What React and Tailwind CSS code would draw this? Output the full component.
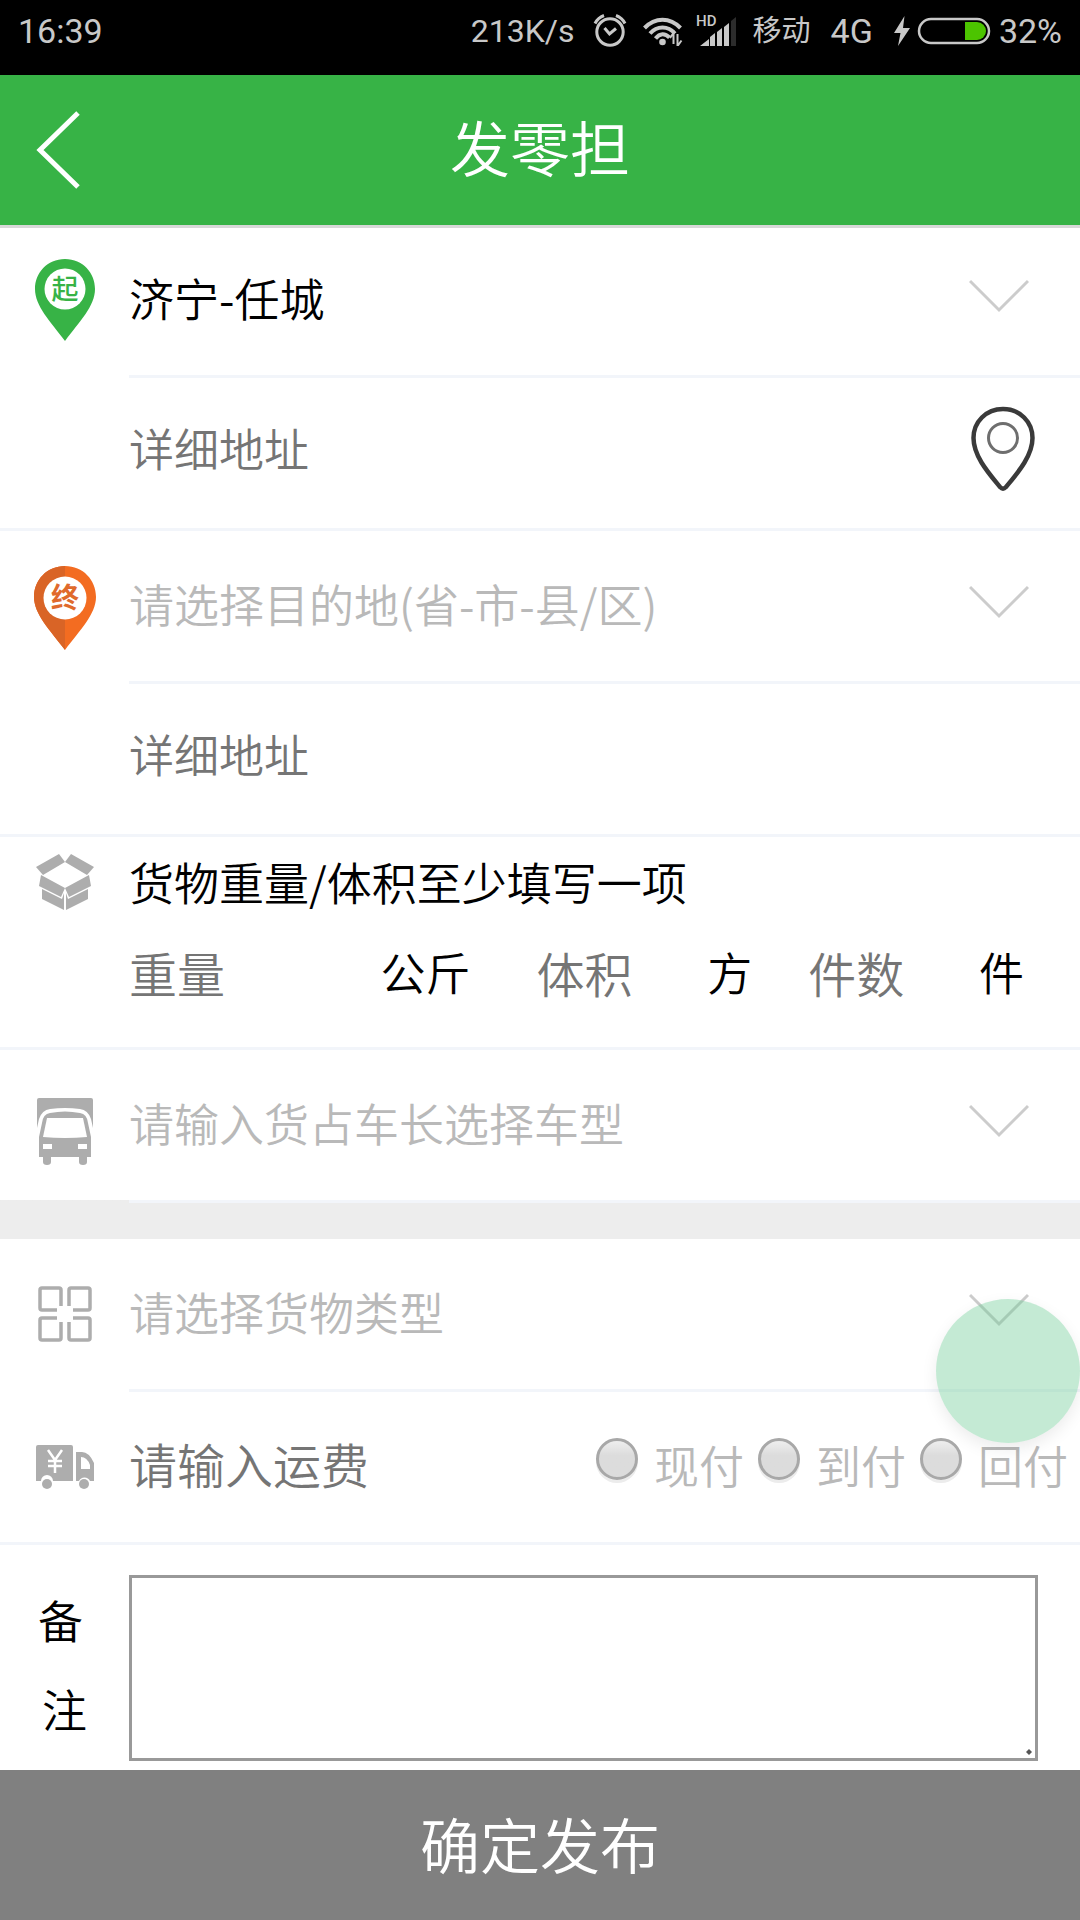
import React, { useState } from 'react';

const payments = [
  { id: 'now', label: '现付' },
  { id: 'arrival', label: '到付' },
  { id: 'receipt', label: '回付' }
];

const StatusBar = () => (
  <div className="flex h-[75px] items-start justify-between bg-black px-[18px] pt-[11px] font-['Roboto','Noto_Sans_CJK_SC',sans-serif] text-[34px] font-normal leading-10 text-[#c8c8c8]">
    <span>16:39</span>
    <div className="flex h-10 items-center">
      <span className="text-[32px]">213K/s</span>
      <svg className="ml-[18px] h-[36px] w-[34px]" viewBox="0 0 34 36" fill="none" stroke="currentColor" strokeWidth="3">
        <circle cx="17" cy="19" r="13.2" />
        <path d="M11.5 15l5 6 6.5-5.5" />
        <path d="M2 10.500C4 6.500 7 4 11 2.500M32 10.500C30 6.500 27 4 23 2.500" />
      </svg>
      <svg className="ml-4 h-[30px] w-10" viewBox="0 0 40 30" fill="none" stroke="currentColor" strokeWidth="4">
        <path d="M1.500 12C12 1 27 1 37.500 12" />
        <path d="M7 17.500C14 9.500 25 9.500 32 17.500" />
        <path d="M12.500 22.500C17 17 22 17 26.500 21.500" />
        <circle cx="19.500" cy="26" r="3.300" fill="currentColor" stroke="none" />
        <path d="M30.500 28V17l-3.500 5M34.500 18v12l4-5.500" strokeWidth="2" />
      </svg>
      <svg className="ml-3 h-[48px] w-[42px]" viewBox="0 -8 42 48" fill="currentColor">
        <path d="M5 31l9-7v7zM15 22l5-4v13h-5zM22 17l5-4v18h-5zM29 12l5-4v23h-5z" />
        <path d="M36 6l5-4v29h-5z" fill="#2c2c2c" />
        <text x="1" y="11" fontSize="15" fontWeight="500">HD</text>
      </svg>
      <span className="ml-4 text-[29px]">移动</span>
      <span className="ml-5">4G</span>
      <svg className="ml-5 h-[30px] w-[18px]" viewBox="0 0 18 30" fill="currentColor">
        <path d="M11.500 0L1 17h6.500L5 30l12-18h-7z" />
      </svg>
      <svg className="ml-[6px] h-[28px] w-[74px]" viewBox="0 0 74 28">
        <rect x="2" y="2" width="70" height="24" rx="12" fill="none" stroke="currentColor" strokeWidth="2.500" />
        <path d="M48 5h12a9 9 0 0 1 0 18H48z" fill="#4cc400" />
      </svg>
      <span className="ml-2">32%</span>
    </div>
  </div>
);

const StartPin = () => (
  <svg className="mb-1 h-[84px] w-[64px]" viewBox="0 0 64 84">
    <path d="M32 1C14 1 2 15 2 31c0 17 15 32 30 52 15-20 30-35 30-52C62 15 50 1 32 1z" fill="#37b346" />
    <circle cx="32" cy="31" r="20.500" fill="#fff" />
    <text x="32" y="41" fontSize="27" fontWeight="500" textAnchor="middle" fill="#37b346">起</text>
  </svg>
);

const EndPin = () => (
  <svg className="h-[86px] w-[64px]" viewBox="0 0 64 86">
    <path d="M32 1C14 1 1 15 1 32c0 17 16 33 31 53 15-20 31-36 31-53C63 15 50 1 32 1z" fill="#f36c21" />
    <path d="M32 1C14 1 1 15 1 32c0 17 16 33 31 53z" fill="#d96426" />
    <circle cx="32" cy="33" r="21.500" fill="#fff" />
    <text x="32" y="43" fontSize="28" fontWeight="700" textAnchor="middle" fill="#e06a2c">终</text>
  </svg>
);

const BoxIcon = () => (
  <svg className="h-[58px] w-[60px]" viewBox="0 0 60 58" fill="#adadad">
    <path d="M24 1L1 14l7 8 22-13zM36 1l23 13-7 8L30 9z" />
    <path d="M6 22l24 13-4 9L4 33zM54 22L30 35l4 9 22-11z" />
    <path d="M7 36l20 10 2-6v17L7 46zM53 36L33 46l-2-6v17l22-11z" />
  </svg>
);

const TruckIcon = () => (
  <svg className="mt-2 h-[68px] w-[58px]" viewBox="0 0 58 68">
    <path d="M1 3q0-2 2-2h52q2 0 2 2v28l-2-9q-3-9-11-10-15-2-30 0-8 1-11 10l-2 9z" fill="#adadad" />
    <path d="M6 26q1-9 8-10 15-3 30 0 7 1 8 10l3 14v20h-4v5q0 3-4 3t-4-3v-5H15v5q0 3-4 3t-4-3v-5H3V40z" fill="#adadad" />
    <path d="M11 21h36l4 19q-22 2-44 0z" fill="#fff" />
    <path d="M7 47h9v5H7zM42 47h9v5h-9z" fill="#fff" />
  </svg>
);

const GridIcon = () => (
  <svg className="mb-1 h-[58px] w-[56px]" viewBox="0 0 56 58" fill="none" stroke="#adadad" strokeWidth="3.500">
    <path d="M20 25H5q-2 0-2-2V5q0-2 2-2h17q2 0 2 2v16M36 25h15q2 0 2-2V5q0-2-2-2H34q-2 0-2 2v16" />
    <path d="M20 33H5q-2 0-2 2v18q0 2 2 2h17q2 0 2-2V37M36 33h15q2 0 2 2v18q0 2-2 2H34q-2 0-2-2V37" />
    <path d="M20 21l4 4M36 21l-4 4M20 37l4-4M36 37l-4-4" stroke="#fff" strokeWidth="3" />
  </svg>
);

const VanIcon = () => (
  <svg className="h-[46px] w-[60px]" viewBox="0 0 60 46">
    <path d="M3 1h33q2 0 2 2v34H18a6 6 0 0 0-12 0H1V3q0-2 2-2z" fill="#adadad" />
    <path d="M41 8h6q7 0 12 11v18h-4a6 6 0 0 0-11 0h-3z" fill="#adadad" />
    <path d="M46 13q6 0 9 8v4h-9z" fill="#fff" />
    <circle cx="12" cy="40" r="5" fill="#adadad" />
    <circle cx="49" cy="40" r="5" fill="#adadad" />
    <path d="M13 6l7 10 7-10M20 16v13M13 17h14M13 22h14" fill="none" stroke="#fff" strokeWidth="2.500" />
  </svg>
);

const AddressPin = () => (
  <svg className="h-[86px] w-[66px]" viewBox="0 0 66 86" fill="none">
    <path d="M33 3C16 3 3.500 16 3.500 32c0 18 15 35 26.500 49q3 3 6 0C47.500 67 62.500 50 62.500 32 62.500 16 50 3 33 3z" stroke="#3a3a3a" strokeWidth="4.500" />
    <circle cx="33" cy="32" r="14.500" stroke="#6e6e6e" strokeWidth="3" />
  </svg>
);

const IconCell = ({ children }) => (
  <div className="flex w-[129px] shrink-0 items-center justify-center">{children}</div>
);

const SelectField = ({ label, text, filled }) => (
  <div className="relative flex h-full flex-1 items-center">
    <select
      aria-label={label}
      className={`h-full w-full appearance-none bg-transparent pb-1 text-[45px] font-[350] outline-none ${filled ? 'text-black' : 'text-[#b9b9b9]'}`}
    >
      <option>{text}</option>
    </select>
    <svg className="pointer-events-none absolute right-[51px] mb-2 h-[34px] w-[60px]" viewBox="0 0 60 34" fill="none" stroke="#ccc" strokeWidth="3">
      <path d="M1 2l29 29L59 2" />
    </svg>
  </div>
);

const inputClass =
  'h-full w-full min-w-0 flex-1 bg-transparent font-[350] outline-none placeholder:text-[#757575] placeholder:opacity-100';

const Measure = ({ label, unit, className }) => (
  <label className={`flex min-w-0 items-center ${className}`}>
    <input aria-label={label} placeholder={label} className={`${inputClass} text-[48px]`} />
    <span className="shrink-0 text-[45px]">{unit}</span>
  </label>
);

const App = () => {
  const [payment, setPayment] = useState('');
  const [remark, setRemark] = useState('');

  return (
    <div className="relative flex min-h-screen flex-col bg-white font-['Noto_Sans_CJK_SC',sans-serif] font-[350] text-black">
      <StatusBar />

      <header className="relative flex h-[150px] items-center justify-center bg-[#37b346] text-white shadow-[0_3px_0_#d8d8d8]">
        <button aria-label="返回" className="absolute left-[35px]">
          <svg className="h-[78px] w-[46px]" viewBox="0 0 46 78" fill="none" stroke="currentColor" strokeWidth="5">
            <path d="M43 2L5 39l38 37" />
          </svg>
        </button>
        <h1 className="pb-2 text-[60px] font-[350]">发零担</h1>
      </header>

      <form className="flex flex-1 flex-col" onSubmit={(e) => e.preventDefault()}>
        {/* Origin */}
        <div className="flex h-[153px]">
          <IconCell><StartPin /></IconCell>
          <div className="flex flex-1 border-b-[3px] border-[#f2f5fa]">
            <SelectField label="出发地" text="济宁-任城" filled />
          </div>
        </div>
        <div className="flex h-[153px] items-center border-b-[3px] border-[#f2f5fa] pl-[129px] pr-11">
          <input aria-label="出发地详细地址" placeholder="详细地址" className={`${inputClass} pb-3 text-[45px]`} />
          <button type="button" aria-label="定位" className="mb-2">
            <AddressPin />
          </button>
        </div>

        {/* Destination */}
        <div className="flex h-[153px]">
          <IconCell><EndPin /></IconCell>
          <div className="flex flex-1 border-b-[3px] border-[#f2f5fa]">
            <SelectField label="目的地" text="请选择目的地(省-市-县/区)" />
          </div>
        </div>
        <div className="flex h-[153px] items-center border-b-[3px] border-[#f2f5fa] pl-[129px] pr-11">
          <input aria-label="目的地详细地址" placeholder="详细地址" className={`${inputClass} pb-3 text-[45px]`} />
        </div>

        {/* Weight / volume / count */}
        <section className="h-[213px] border-b-[3px] border-[#f2f5fa]">
          <div className="flex h-[90px] items-center">
            <IconCell><BoxIcon /></IconCell>
            <p className="text-[45px]">货物重量/体积至少填写一项</p>
          </div>
          <div className="grid h-[90px] grid-cols-[3fr_2fr_2fr] pl-[129px]">
            <Measure label="重量" unit="公斤" className="pr-[66px]" />
            <Measure label="体积" unit="方" className="pr-14" />
            <Measure label="件数" unit="件" className="pr-14" />
          </div>
        </section>

        <div className="flex h-[153px] bg-gradient-to-t from-[#ededed] from-[3px] to-white to-[3px]">
          <IconCell><TruckIcon /></IconCell>
          <div className="flex flex-1 border-b-[3px] border-[#f2f5fa]">
            <SelectField label="车型" text="请输入货占车长选择车型" />
          </div>
        </div>
        <div className="h-9 bg-[#ededed]" />

        <div className="flex h-[153px]">
          <IconCell><GridIcon /></IconCell>
          <div className="flex flex-1 border-b-[3px] border-[#f2f5fa]">
            <SelectField label="货物类型" text="请选择货物类型" />
          </div>
        </div>

        {/* Freight */}
        <div className="flex h-[153px] items-center border-b-[3px] border-[#f2f5fa] pr-3">
          <IconCell><VanIcon /></IconCell>
          <input aria-label="运费" placeholder="请输入运费" className={`${inputClass} pb-2 text-[48px]`} />
          <div className="flex gap-[14px]">
            {payments.map((item) => (
              <label key={item.id} className="flex items-center gap-4 text-[45px] text-[#b9b9b9]">
                <input
                  type="radio"
                  name="payment"
                  value={item.id}
                  checked={payment === item.id}
                  onChange={() => setPayment(item.id)}
                  className="mb-4 h-[42px] w-[42px] appearance-none rounded-full border-[3px] border-[#a8a8a8] bg-gradient-to-b from-[#eee] to-[#dcdcdc] to-40% shadow-[0_3px_0_#ececec] checked:to-[#37b346]"
                />
                <span className="pb-1">{item.label}</span>
              </label>
            ))}
          </div>
        </div>

        {/* Remark */}
        <div className="flex pb-[9px] pr-[42px] pt-[30px]">
          <label htmlFor="remark" className="flex w-[129px] shrink-0 flex-col pl-[38px] text-[45px] leading-[89px]">
            <span>备</span>
            <span className="pl-1">注</span>
          </label>
          <div className="relative flex flex-1">
            <textarea
              id="remark"
              value={remark}
              onChange={(e) => setRemark(e.target.value)}
              className="h-[186px] w-full resize-none border-[3px] border-[#999] p-2 text-[45px] outline-none"
            />
            <svg className="pointer-events-none absolute bottom-1 right-1 h-2 w-2" viewBox="0 0 8 8">
              <path d="M3 0l3 3-3 3-3-3z" fill="#555" />
            </svg>
          </div>
        </div>

        <button type="submit" className="mt-auto h-[150px] w-full bg-[#808080] pb-1 text-[60px] font-[350] text-white">
          确定发布
        </button>
      </form>

      <button
        aria-label="悬浮按钮"
        className="absolute right-0 top-[1299px] h-36 w-36 rounded-full bg-[rgb(107,202,148)]/40 shadow-[0_6px_16px_rgba(0,0,0,0.08)]"
      />
    </div>
  );
};

export default App;
